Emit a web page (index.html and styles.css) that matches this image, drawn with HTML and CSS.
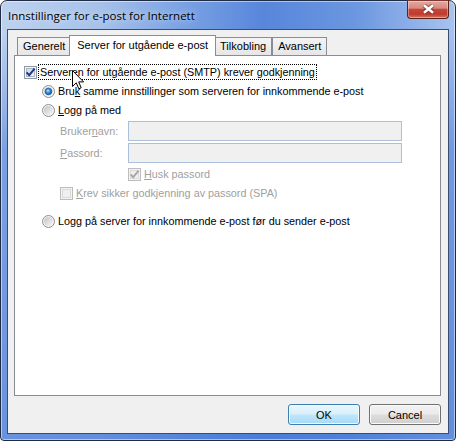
FILE: index.html
```html
<!DOCTYPE html>
<html lang="no">
<head>
<meta charset="utf-8">
<title>Innstillinger for e-post for Internett</title>
<link rel="stylesheet" href="styles.css">
</head>
<body>
<div class="window">
  <div class="titlebar">
    <span class="title">Innstillinger for e-post for Internett</span>
    <div class="close">
      <svg width="13" height="10" viewBox="0 0 13 10">
        <path d="M2 1.2 L11 8.8 M11 1.2 L2 8.8" stroke="#4a1a16" stroke-width="4.4" opacity="0.55"/>
        <path d="M2 1.2 L11 8.8 M11 1.2 L2 8.8" stroke="#ffffff" stroke-width="2.6"/>
      </svg>
    </div>
  </div>
  <div class="client">
    <div class="tabs">
      <div class="tab">Generelt</div>
      <div class="tab active">Server for utgående e-post</div>
      <div class="tab">Tilkobling</div>
      <div class="tab">Avansert</div>
    </div>
    <div class="panel">
      <div class="row r-check">
        <svg class="ctl gap1" width="13" height="13" viewBox="0 0 13 13">
          <defs><linearGradient id="cbg" x1="0" y1="0" x2="1" y2="1"><stop offset="0" stop-color="#cdd6e2"/><stop offset="1" stop-color="#f4f6f9"/></linearGradient></defs>
          <rect x="0.5" y="0.5" width="12" height="12" fill="#f4f4f4" stroke="#8f9aa8"/>
          <rect x="2.5" y="2.5" width="8" height="8" fill="url(#cbg)" stroke="#aeb6c2"/>
          <path d="M2.6 6.4 L5.2 9.2 L10.6 2.6" fill="none" stroke="#22388c" stroke-width="2"/>
        </svg>
        <span class="focus">Serveren for utgående e-post (SMTP) krever godkjenning</span>
      </div>
      <div class="row r-radio">
        <svg class="ctl" width="13" height="13" viewBox="0 0 13 13">
          <defs>
            <linearGradient id="rin1" x1="0" y1="0" x2="1" y2="1"><stop offset="0" stop-color="#c2c2c2"/><stop offset="1" stop-color="#f6f6f6"/></linearGradient>
            <radialGradient id="rsel" cx="0.42" cy="0.38" r="0.7"><stop offset="0" stop-color="#c4eaff"/><stop offset="0.45" stop-color="#2e8fe2"/><stop offset="1" stop-color="#0b4898"/></radialGradient>
          </defs>
          <circle cx="6.5" cy="6.5" r="6" fill="#f4f4f4" stroke="#8e8f8f"/>
          <circle cx="6.5" cy="6.5" r="4.6" fill="url(#rin1)"/>
          <circle cx="6.5" cy="6.5" r="3.3" fill="url(#rsel)" stroke="#1c4d8e" stroke-width="0.7"/>
        </svg>
        <span>Bru<u>k</u> samme innstillinger som serveren for innkommende e-post</span>
      </div>
      <div class="row r-radio">
        <svg class="ctl" width="13" height="13" viewBox="0 0 13 13">
          <defs><linearGradient id="rin2" x1="0" y1="0" x2="1" y2="1"><stop offset="0" stop-color="#c2c2c2"/><stop offset="1" stop-color="#f8f8f8"/></linearGradient></defs>
          <circle cx="6.5" cy="6.5" r="6" fill="#f4f4f4" stroke="#8e8f8f"/>
          <circle cx="6.5" cy="6.5" r="4.6" fill="url(#rin2)"/>
        </svg>
        <span><u>L</u>ogg på med</span>
      </div>
      <div class="field f-user">
        <span class="flabel">Bruker<u>n</u>avn:</span>
        <span class="input"></span>
      </div>
      <div class="field f-pass">
        <span class="flabel"><u>P</u>assord:</span>
        <span class="input"></span>
      </div>
      <div class="row r-husk dis">
        <svg class="ctl" width="13" height="13" viewBox="0 0 13 13">
          <rect x="0.5" y="0.5" width="12" height="12" fill="#f4f4f4" stroke="#bcbcbc"/>
          <rect x="2.5" y="2.5" width="8" height="8" fill="#f0f0f0" stroke="#dadada"/>
          <path d="M2.6 6.4 L5.2 9.2 L10.6 2.6" fill="none" stroke="#a8a8a8" stroke-width="2"/>
        </svg>
        <span><u>H</u>usk passord</span>
      </div>
      <div class="row r-krev dis">
        <svg class="ctl" width="13" height="13" viewBox="0 0 13 13">
          <rect x="0.5" y="0.5" width="12" height="12" fill="#f4f4f4" stroke="#bcbcbc"/>
          <rect x="2.5" y="2.5" width="8" height="8" fill="#f0f0f0" stroke="#dadada"/>
        </svg>
        <span><u>K</u>rev sikker godkjenning av passord (SPA)</span>
      </div>
      <div class="row r-radio r-last">
        <svg class="ctl" width="13" height="13" viewBox="0 0 13 13">
          <defs><linearGradient id="rin3" x1="0" y1="0" x2="1" y2="1"><stop offset="0" stop-color="#c2c2c2"/><stop offset="1" stop-color="#f8f8f8"/></linearGradient></defs>
          <circle cx="6.5" cy="6.5" r="6" fill="#f4f4f4" stroke="#8e8f8f"/>
          <circle cx="6.5" cy="6.5" r="4.6" fill="url(#rin3)"/>
        </svg>
        <span>Logg på server for innkommende e-post før du sender e-post</span>
      </div>
    </div>
    <div class="buttons">
      <button class="btn btn-default">OK</button>
      <button class="btn">Cancel</button>
    </div>
  </div>
  <svg class="cursor" width="13" height="21" viewBox="0 0 13 21">
    <path d="M0.5 0.5 L0.5 16.5 L4.3 12.8 L6.8 18.8 L9.2 17.8 L6.7 11.9 L11.6 11.9 Z" fill="#ffffff" stroke="#000000" stroke-width="1" stroke-linejoin="miter"/>
  </svg>
</div>
</body>
</html>
```
FILE: styles.css
```css
* {
  box-sizing: border-box;
}

html,
body {
  margin: 0;
  padding: 0;
}

body {
  width: 456px;
  height: 441px;
  overflow: hidden;
  background: #ffffff;
  font-family: "Liberation Sans", Arial, sans-serif;
  font-size: 10.8px;
  color: #000000;
}

.window {
  position: relative;
  width: 456px;
  height: 441px;
  border: 1px solid #1f2c44;
  border-radius: 7px 7px 4px 4px;
  padding: 0 6px 6px;
  display: flex;
  flex-direction: column;
  background:
    linear-gradient(180deg, rgba(70, 120, 215, 0) 0, rgba(70, 120, 215, 0) 32px, rgba(70, 120, 215, 0.55) 150px, rgba(70, 120, 215, 0.7) 100%),
    linear-gradient(90deg, #bed2ee 0%, #a6c1ea 22%, #7aa2e3 40%, #5786db 58%, #6b97e0 78%, #a8c3ef 100%);
  box-shadow: inset 0 0 0 1px rgba(255, 255, 255, 0.5);
}

.titlebar {
  height: 28px;
  display: flex;
  align-items: center;
  padding-left: 1px;
}

.title {
  font-family: "Open Sans", "Noto Sans", sans-serif;
  font-size: 11.5px;
  color: #000000;
  text-shadow: 0 0 6px rgba(255, 255, 255, 0.8);
}

.close {
  margin-left: auto;
  align-self: flex-start;
  margin-top: -1px;
  width: 42px;
  height: 19px;
  border: 1px solid #5a211b;
  border-top-color: #7a3a33;
  border-radius: 0 0 4px 4px;
  display: flex;
  align-items: center;
  justify-content: center;
  padding-bottom: 1px;
  background: linear-gradient(180deg, #e4a89f 0%, #d88a80 42%, #c4463b 50%, #bf3a2f 78%, #d4785e 100%);
  box-shadow: inset 0 0 0 1px rgba(255, 255, 255, 0.35);
}

.client {
  flex: 1;
  display: flex;
  flex-direction: column;
  border: 1px solid #3a4d70;
  background: #f0f0f0;
  padding: 5px 7px 8px 6px;
}

.tabs {
  height: 20px;
  display: flex;
  align-items: flex-end;
  padding-left: 3px;
}

.tab {
  height: 18px;
  line-height: 17px;
  padding: 0 5px;
  font-size: 11px;
  border: 1px solid #898c95;
  border-bottom: none;
  background: linear-gradient(180deg, #f4f4f4 0%, #e6e6e6 100%);
  white-space: nowrap;
}

.tab.active {
  position: relative;
  z-index: 1;
  height: 21px;
  line-height: 18px;
  margin: 0 -2px -1px;
  padding: 0 7px;
  background: #ffffff;
}

.panel {
  flex: 1;
  display: flex;
  flex-direction: column;
  border: 1px solid #898c95;
  background: #ffffff;
  padding: 0 0 0 9px;
}

.row {
  height: 18px;
  display: flex;
  align-items: center;
  white-space: nowrap;
}

.ctl {
  display: block;
  flex: none;
  margin-right: 3px;
}

.ctl.gap1 {
  margin-right: 1px;
}

.r-check {
  margin-top: 7px;
}

.focus {
  height: 16px;
  line-height: 14px;
  padding: 0 1px;
  border: 1px dotted #000000;
}

.r-radio {
  margin-left: 18px;
  margin-top: 1px;
}

.r-last {
  margin-top: 10px;
}

.field {
  height: 20px;
  display: flex;
  align-items: center;
  margin-left: 36px;
  margin-top: 2px;
}

.flabel {
  width: 68px;
  color: #a0a0a0;
}

.input {
  width: 274px;
  height: 20px;
  border: 1px solid #abc0dc;
  background: #f0f0f0;
}

.dis {
  color: #a0a0a0;
}

.r-husk {
  margin-left: 104px;
  margin-top: 2px;
}

.r-krev {
  margin-left: 36px;
  margin-top: 1px;
}

.buttons {
  display: flex;
  justify-content: flex-end;
  gap: 9px;
  margin-top: 8px;
}

.btn {
  width: 72px;
  height: 21px;
  padding: 0;
  font-family: "Liberation Sans", Arial, sans-serif;
  font-size: 11px;
  color: #000000;
  border: 1px solid #707070;
  border-radius: 3px;
  background: linear-gradient(180deg, #f2f2f2 0%, #ebebeb 48%, #dddddd 52%, #cfcfcf 100%);
  box-shadow: inset 0 0 0 1px #fbfbfb;
}

.btn-default {
  border-color: #3c7fb1;
  background: linear-gradient(180deg, #eaf6fd 0%, #d9f0fc 48%, #bee6fd 52%, #a7d9f5 100%);
  box-shadow: inset 0 0 0 1px #f4fbff;
}

.cursor {
  position: absolute;
  left: 71px;
  top: 69px;
}
```
